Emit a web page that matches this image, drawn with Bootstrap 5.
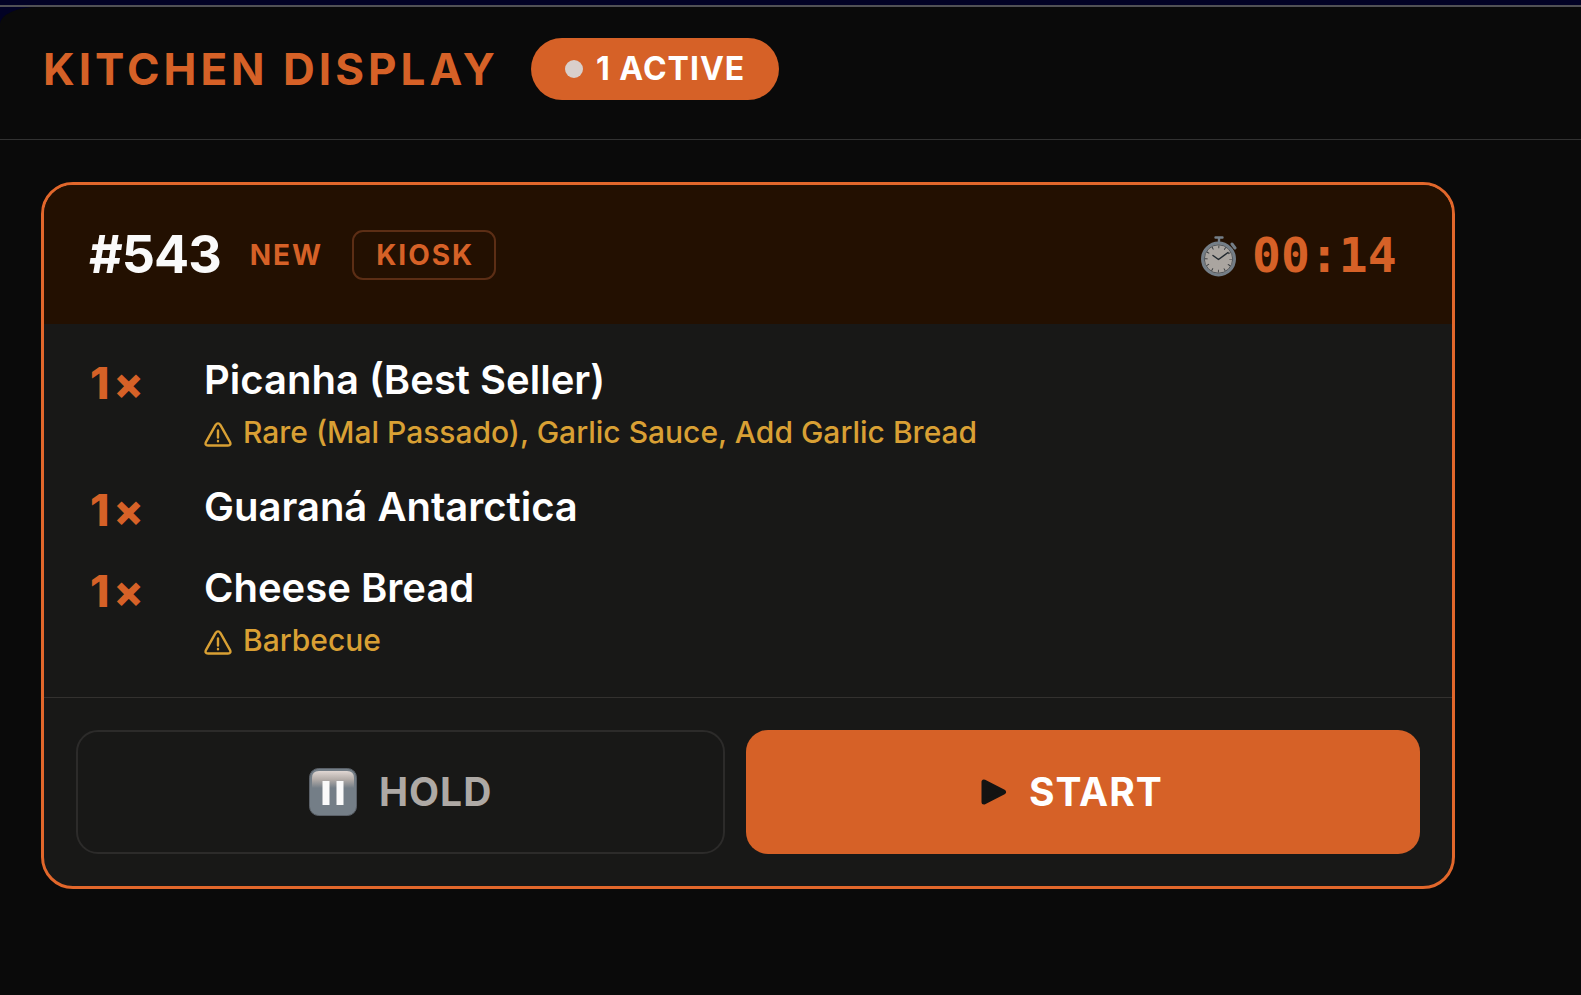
<!DOCTYPE html>
<html lang="en" data-bs-theme="dark">
<head>
<meta charset="utf-8">
<meta name="viewport" content="width=device-width, initial-scale=1">
<title>Kitchen Display</title>
<link href="https://cdn.jsdelivr.net/npm/bootstrap@5.3.0/dist/css/bootstrap.min.css" rel="stylesheet">
<style>
  :root { --kds-orange: #d66127; --kds-edge: #e2672b; --kds-amber: #d9a034; --kds-panel: #181817; }
  body { background: #0a0a0a; color: #fff; font-family: Inter, "Liberation Sans", sans-serif; }
  .kds-top { background: #020225; padding-top: 5px; }
  .kds-rim { border-top: 2px solid #515155; }
  .kds-header { background: #0a0a0a; border-bottom: 1px solid #323232; border-top-left-radius: 38px 17px; padding: 31px 43px 39px; gap: 32px; }
  .kds-title { color: var(--kds-orange); font-size: 44px; line-height: 62px; font-weight: 700; letter-spacing: 4px; }
  .kds-active { background: var(--kds-orange); height: 62px; padding: 0 34px; gap: 13px; font-size: 32px; font-weight: 700; letter-spacing: 1px; }
  .kds-dot { width: 18px; height: 18px; background: #d9cfcb; }
  .kds-board { padding: 42px 8% 40px 41px; }
  .ticket { background: var(--kds-panel); border: 3px solid var(--kds-edge); border-radius: 32px; }
  .ticket-head { background: #231001; min-height: 139px; padding: 0 55px 0 45px; color: var(--kds-orange); }
  .ticket-labels { gap: 29px; }
  .ticket-no { font-size: 52px; line-height: 62px; font-weight: 700; letter-spacing: -1px; color: #fafafa; }
  .ticket-tag { font-size: 28px; line-height: 32px; font-weight: 700; letter-spacing: 2px; }
  .ticket-source { border: 2px solid #5c2e15; border-radius: 11px; padding: 7px 20px 7px 22px; }
  .ticket-time { font: 700 48px/56px "DejaVu Sans Mono", monospace; gap: 15px; }
  .ticket-items { padding: 32px 46px 39px; gap: 33px; }
  .ticket-qty { width: 114px; color: var(--kds-orange); font-size: 44px; line-height: 54px; height: 48px; font-weight: 800; letter-spacing: 4px; }
  .ticket-name { font-size: 40px; line-height: 48px; font-weight: 600; }
  .ticket-note { color: var(--kds-amber); font-size: 30px; line-height: 36px; font-weight: 500; margin-top: 10px; gap: 11px; }
  .ticket-foot { border-top: 1px solid #33312f; padding: 32px; gap: 21px; grid-template-columns: 27fr 28fr; }
  .ticket-btn { height: 124px; border-radius: 22px; font-size: 39px; font-weight: 700; letter-spacing: 1px; gap: 22px; }
  .btn-hold { border: 2px solid #2c2b2a; color: #aea9a5; }
  .btn-start { background: var(--kds-orange); color: #fff; padding-right: 34px; }
</style>
</head>
<body>
<header class="kds-top">
  <div class="kds-rim">
    <div class="kds-header d-flex align-items-center">
      <h1 class="kds-title mb-0">KITCHEN DISPLAY</h1>
      <div class="kds-active rounded-pill d-flex align-items-center">
        <span class="kds-dot rounded-circle"></span><span>1 ACTIVE</span>
      </div>
    </div>
  </div>
</header>

<main class="kds-board">
  <article class="ticket overflow-hidden">
    <div class="ticket-head d-flex align-items-center justify-content-between">
      <div class="ticket-labels d-flex align-items-center">
        <h2 class="ticket-no mb-0">#543</h2>
        <span class="ticket-tag">NEW</span>
        <span class="ticket-tag ticket-source">KIOSK</span>
      </div>
      <div class="ticket-time d-flex align-items-center">
        <svg class="mt-1" width="36" height="42" viewBox="0 0 36 42" aria-hidden="true">
          <path d="M14.500 1.500h7M18 2v5" stroke="#747e87" stroke-width="2.400" stroke-linecap="round" fill="none"/>
          <path d="M31 8l3 4" stroke="#747e87" stroke-width="3" stroke-linecap="round"/>
          <circle cx="17.500" cy="23" r="16" fill="#aaa5a0" stroke="#747e87" stroke-width="3"/>
          <circle cx="17.500" cy="23" r="14.200" fill="none" stroke="#51565b" stroke-width="1"/>
          <circle cx="17.500" cy="23" r="12.200" fill="none" stroke="#34373a" stroke-width="2.800" stroke-dasharray=".9 5.488" stroke-dashoffset=".45"/>
          <path d="M12 19.500l5.500 4 9.500-7" stroke="#222a30" stroke-width="1.500" fill="none" stroke-linecap="round" stroke-linejoin="round"/>
        </svg>
        <time>00:14</time>
      </div>
    </div>

    <ul class="ticket-items list-unstyled d-flex flex-column mb-0">
      <li class="d-flex">
        <span class="ticket-qty flex-shrink-0">1×</span>
        <div>
          <div class="ticket-name">Picanha (Best Seller)</div>
          <div class="ticket-note d-flex align-items-center">
            <svg class="flex-shrink-0 mt-1" width="28" height="25" viewBox="2 0 28 25" fill="none" stroke="currentColor" stroke-width="2.400" stroke-linecap="round" stroke-linejoin="round" aria-hidden="true"><path d="M13.500 3.200L4.100 19.800Q2.400 23.500 6 23.500H26Q29.600 23.500 27.900 19.800L18.500 3.200Q16 -.4 13.500 3.200Z"/><path d="M16 8.500v7M16 19v.2"/></svg>
            <span>Rare (Mal Passado), Garlic Sauce, Add Garlic Bread</span>
          </div>
        </div>
      </li>
      <li class="d-flex">
        <span class="ticket-qty flex-shrink-0">1×</span>
        <div class="ticket-name">Guaraná Antarctica</div>
      </li>
      <li class="d-flex">
        <span class="ticket-qty flex-shrink-0">1×</span>
        <div>
          <div class="ticket-name">Cheese Bread</div>
          <div class="ticket-note d-flex align-items-center">
            <svg class="flex-shrink-0 mt-1" width="28" height="25" viewBox="2 0 28 25" fill="none" stroke="currentColor" stroke-width="2.400" stroke-linecap="round" stroke-linejoin="round" aria-hidden="true"><path d="M13.500 3.200L4.100 19.800Q2.400 23.500 6 23.500H26Q29.600 23.500 27.900 19.800L18.500 3.200Q16 -.4 13.500 3.200Z"/><path d="M16 8.500v7M16 19v.2"/></svg>
            <span>Barbecue</span>
          </div>
        </div>
      </li>
    </ul>

    <div class="ticket-foot d-grid">
      <button type="button" class="btn ticket-btn btn-hold d-flex align-items-center justify-content-center">
        <svg width="48" height="48" viewBox="0 0 48 48" aria-hidden="true">
          <defs><linearGradient id="gloss" x1="0" y1="0" x2="0" y2="1"><stop offset="0" stop-color="#e0d7d3"/><stop offset=".5" stop-color="#b3aca8"/><stop offset="1" stop-color="#747e87"/></linearGradient></defs>
          <rect x=".5" y=".5" width="47" height="47" rx="9" fill="#747e87" stroke="#5a6068"/>
          <path d="M3 10Q3 3 10 3H38Q45 3 45 10V20H3Z" fill="url(#gloss)"/>
          <path d="M13.500 13h7v24h-7zM27.500 13h7v24h-7z" fill="#fafafa"/>
        </svg>
        <span>HOLD</span>
      </button>
      <button type="button" class="btn ticket-btn btn-start d-flex align-items-center justify-content-center">
        <svg width="26" height="28" viewBox="0 0 26 28" aria-hidden="true"><path d="M3 4v20L22.500 14z" fill="#141312" stroke="#141312" stroke-width="5" stroke-linejoin="round"/></svg>
        <span>START</span>
      </button>
    </div>
  </article>
</main>
<script src="https://cdn.jsdelivr.net/npm/bootstrap@5.3.0/dist/js/bootstrap.bundle.min.js"></script>
</body>
</html>
